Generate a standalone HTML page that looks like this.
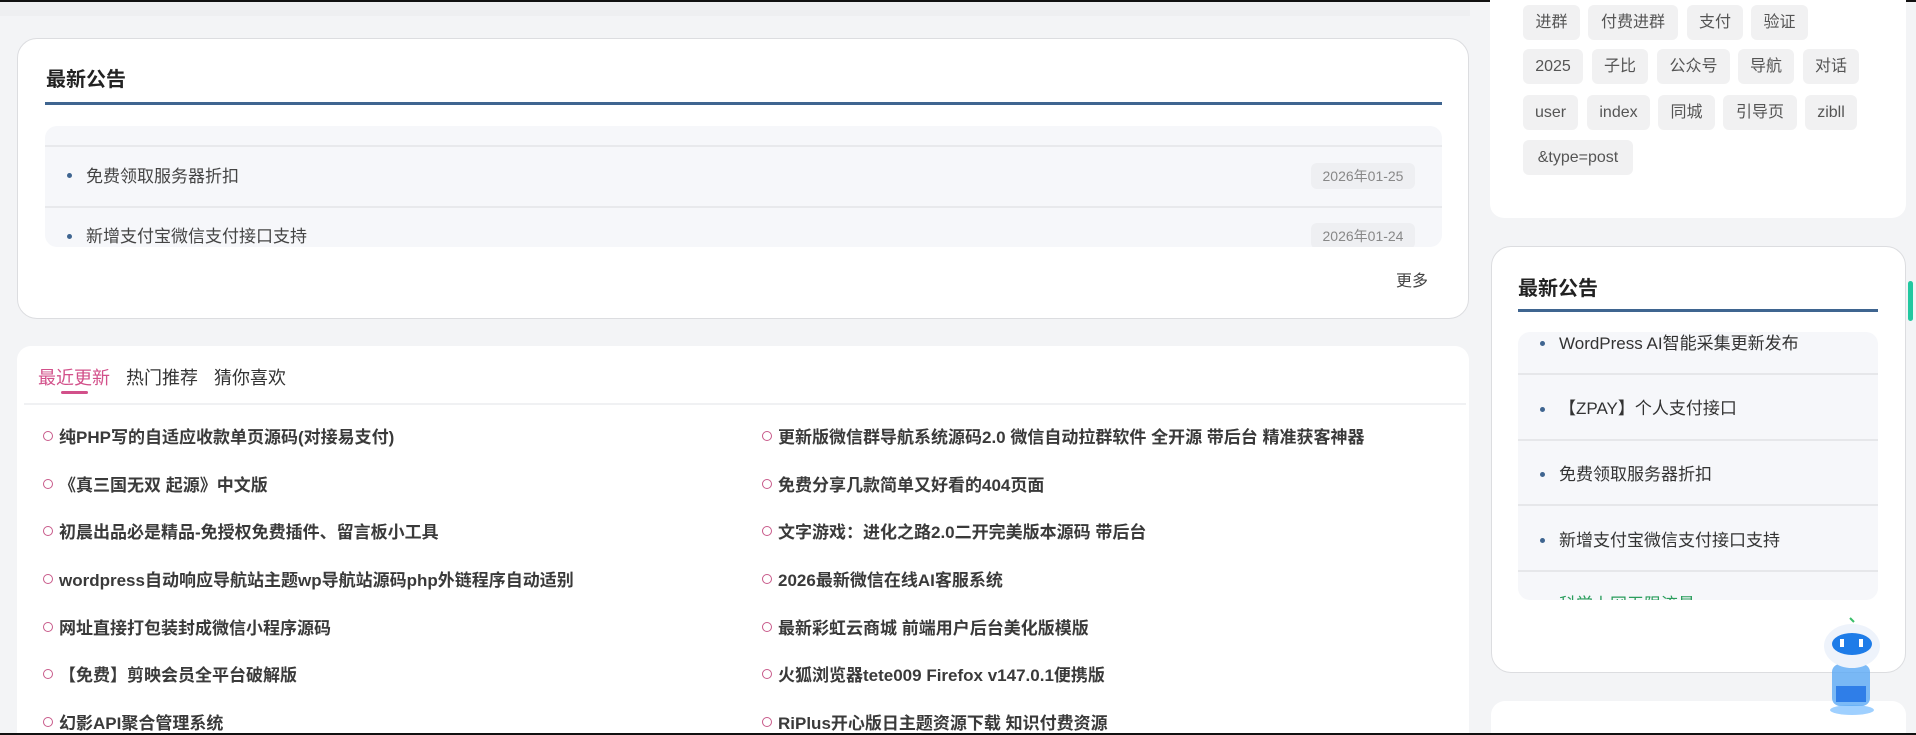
<!DOCTYPE html>
<html><head><meta charset="utf-8"><style>
*{margin:0;padding:0;box-sizing:border-box}
html,body{width:1916px;height:735px;overflow:hidden}
body{background:#f3f4f6;font-family:"Liberation Sans","Noto Sans CJK SC",sans-serif;color:#333;position:relative}
.abs{position:absolute}
.card{position:absolute;background:#fff;border-radius:20px;border:1px solid #dcdde0}
.ttl{position:absolute;font-size:20px;font-weight:bold;color:#222}
.line{position:absolute;height:3px;background:#3f6590}
.tag{position:absolute;height:35px;background:#f1f1f2;border-radius:6px;font-size:16px;color:#555;line-height:35px;text-align:center}
.li{position:absolute;font-size:17px;color:#3a3a3a;white-space:nowrap;font-weight:bold}
.li:before{content:"";position:absolute;left:-16px;top:8px;width:8px;height:8px;border:1.5px solid #c85a8a;border-radius:50%}
.dot{position:absolute;width:5px;height:5px;border-radius:50%;background:#3f6590}
</style></head><body>
<div class="abs" style="left:0;top:0;width:1916px;height:2px;background:#111"></div>
<div class="abs" style="left:0;top:2px;width:1470px;height:14px;background:#eeeff1"></div>

<!-- left notice card -->
<div class="card" style="left:17px;top:38px;width:1452px;height:281px"></div>
<div class="ttl" style="left:46px;top:63px">最新公告</div>
<div class="line" style="left:45px;top:102px;width:1397px"></div>
<div class="abs" style="left:45px;top:126px;width:1397px;height:121px;background:#f6f7fa;border-radius:12px;overflow:hidden">
 <div class="abs" style="left:0;top:19px;width:100%;height:2px;background:#e8e9ec"></div>
 <div class="abs" style="left:0;top:80px;width:100%;height:2px;background:#e8e9ec"></div>
 <div class="dot" style="left:22px;top:47px"></div>
 <div class="abs" style="left:41px;top:36px;font-size:17px;color:#444">免费领取服务器折扣</div>
 <div class="abs" style="left:1266px;top:37px;width:104px;height:26px;background:#eeeff2;border-radius:6px;font-size:14px;color:#888;line-height:26px;text-align:center">2026年01-25</div>
 <div class="dot" style="left:22px;top:108px"></div>
 <div class="abs" style="left:41px;top:96px;font-size:17px;color:#444">新增支付宝微信支付接口支持</div>
 <div class="abs" style="left:1266px;top:97px;width:104px;height:26px;background:#eeeff2;border-radius:6px;font-size:14px;color:#888;line-height:26px;text-align:center">2026年01-24</div>
</div>
<div class="abs" style="left:1396px;top:267px;font-size:16px;color:#444">更多</div>

<!-- left list card -->
<div class="card" style="left:17px;top:346px;width:1452px;height:389px;border-radius:14px 14px 0 0;border:none"></div>
<div class="abs" style="left:38px;top:364px;font-size:18px;color:#d2508a">最近更新</div>
<div class="abs" style="left:126px;top:364px;font-size:18px;color:#333">热门推荐</div>
<div class="abs" style="left:214px;top:364px;font-size:18px;color:#333">猜你喜欢</div>
<div class="abs" style="left:61px;top:391px;width:27px;height:3px;background:#d2508a;border-radius:2px"></div>
<div class="abs" style="left:24px;top:403px;width:1442px;height:2px;background:#f0f1f3"></div>
<div class="li" style="left:59px;top:423px">纯PHP写的自适应收款单页源码(对接易支付)</div>
<div class="li" style="left:59px;top:471px">《真三国无双 起源》中文版</div>
<div class="li" style="left:59px;top:518px">初晨出品必是精品-免授权免费插件、留言板小工具</div>
<div class="li" style="left:59px;top:566px">wordpress自动响应导航站主题wp导航站源码php外链程序自动适别</div>
<div class="li" style="left:59px;top:614px">网址直接打包装封成微信小程序源码</div>
<div class="li" style="left:59px;top:661px">【免费】剪映会员全平台破解版</div>
<div class="li" style="left:59px;top:709px">幻影API聚合管理系统</div>
<div class="li" style="left:778px;top:423px">更新版微信群导航系统源码2.0 微信自动拉群软件 全开源 带后台 精准获客神器</div>
<div class="li" style="left:778px;top:471px">免费分享几款简单又好看的404页面</div>
<div class="li" style="left:778px;top:518px">文字游戏：进化之路2.0二开完美版本源码 带后台</div>
<div class="li" style="left:778px;top:566px">2026最新微信在线AI客服系统</div>
<div class="li" style="left:778px;top:614px">最新彩虹云商城 前端用户后台美化版模版</div>
<div class="li" style="left:778px;top:661px">火狐浏览器tete009 Firefox v147.0.1便携版</div>
<div class="li" style="left:778px;top:709px">RiPlus开心版日主题资源下载 知识付费资源</div>

<!-- right tags card -->
<div class="card" style="left:1490px;top:-20px;width:416px;height:238px;border:none;border-radius:14px"></div>
<div class="tag" style="left:1523px;top:5px;width:57px">进群</div>
<div class="tag" style="left:1588px;top:5px;width:90px">付费进群</div>
<div class="tag" style="left:1687px;top:5px;width:56px">支付</div>
<div class="tag" style="left:1751px;top:5px;width:57px">验证</div>
<div class="tag" style="left:1523px;top:49px;width:60px">2025</div>
<div class="tag" style="left:1592px;top:49px;width:56px">子比</div>
<div class="tag" style="left:1657px;top:49px;width:73px">公众号</div>
<div class="tag" style="left:1738px;top:49px;width:56px">导航</div>
<div class="tag" style="left:1803px;top:49px;width:56px">对话</div>
<div class="tag" style="left:1523px;top:95px;width:55px">user</div>
<div class="tag" style="left:1587px;top:95px;width:63px">index</div>
<div class="tag" style="left:1658px;top:95px;width:57px">同城</div>
<div class="tag" style="left:1723px;top:95px;width:74px">引导页</div>
<div class="tag" style="left:1805px;top:95px;width:52px">zibll</div>
<div class="tag" style="left:1523px;top:140px;width:110px">&amp;type=post</div>

<!-- right notice card -->
<div class="card" style="left:1491px;top:246px;width:415px;height:427px"></div>
<div class="ttl" style="left:1518px;top:272px">最新公告</div>
<div class="line" style="left:1518px;top:309px;width:360px"></div>
<div class="abs" style="left:1518px;top:332px;width:360px;height:268px;background:#f6f7fa;border-radius:12px;overflow:hidden">
 <div class="abs" style="left:0;top:41px;width:100%;height:2px;background:#e6e7ea"></div>
 <div class="abs" style="left:0;top:107px;width:100%;height:2px;background:#e6e7ea"></div>
 <div class="abs" style="left:0;top:172px;width:100%;height:2px;background:#e6e7ea"></div>
 <div class="abs" style="left:0;top:238px;width:100%;height:2px;background:#e6e7ea"></div>
 <div class="dot" style="left:22px;top:9px"></div><div class="abs" style="left:41px;top:-3px;font-size:17px;color:#333">WordPress AI智能采集更新发布</div>
 <div class="dot" style="left:22px;top:75px"></div><div class="abs" style="left:41px;top:62px;font-size:17px;color:#333">【ZPAY】个人支付接口</div>
 <div class="dot" style="left:22px;top:140px"></div><div class="abs" style="left:41px;top:128px;font-size:17px;color:#333">免费领取服务器折扣</div>
 <div class="dot" style="left:22px;top:206px"></div><div class="abs" style="left:41px;top:194px;font-size:17px;color:#333">新增支付宝微信支付接口支持</div>
 <div class="abs" style="left:41px;top:258px;font-size:17px;color:#2a9d5c">科学上网无限流量</div>
</div>
<div class="card" style="left:1491px;top:701px;width:415px;height:34px;border:none;border-radius:14px 14px 0 0"></div>
<div class="abs" style="left:1908px;top:281px;width:5px;height:40px;background:#22c8a0;border-radius:3px"></div>

<!-- robot -->
<svg class="abs" style="left:1810px;top:606px" width="80" height="112" viewBox="0 0 80 112">
<ellipse cx="42" cy="104" rx="22" ry="5" fill="#9fd0ff"/>
<rect x="22" y="58" width="38" height="42" rx="8" fill="#5aa9f5" opacity=".8"/>
<rect x="26" y="80" width="30" height="16" fill="#2f7ee8"/>
<ellipse cx="42" cy="40" rx="28" ry="22" fill="#eef3fb"/>
<ellipse cx="42" cy="38" rx="20" ry="11" fill="#1e7ce8"/>
<rect x="30" y="33" width="4" height="8" fill="#fff"/><rect x="49" y="33" width="4" height="8" fill="#fff"/>
<path d="M40 12l4 4" stroke="#3bbf6a" stroke-width="2"/>
</svg>
<div class="abs" style="left:0;top:733px;width:1916px;height:2px;background:#111"></div>
</body></html>
